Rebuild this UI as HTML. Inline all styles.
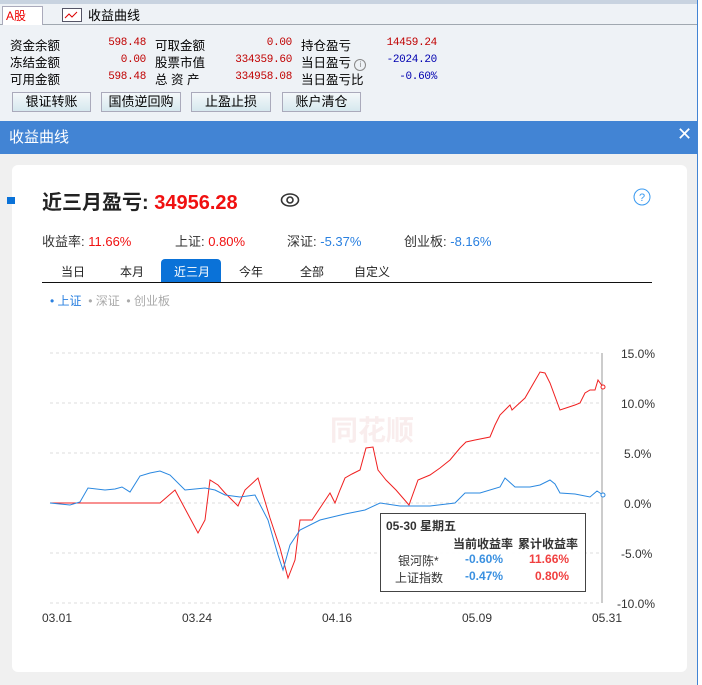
<!DOCTYPE html><html><head><meta charset="utf-8"><style>
body{margin:0;width:702px;height:685px;overflow:hidden;background:#f0f0f0;font-family:"Liberation Sans","Noto Sans CJK SC",sans-serif;position:relative}
.a{position:absolute;white-space:nowrap}
.top{position:absolute;left:0;top:0;width:697px;height:121px;background:#eef2f6}
.r,.b{position:absolute;text-align:right;font-family:"Liberation Mono",monospace;font-size:11px;letter-spacing:-0.3px}
.r{color:#c00000}.b{color:#0000b0}
.l{font-size:12.5px;color:#000}
.btn{position:absolute;top:92px;height:18px;border:1px solid #aab;background:linear-gradient(#f4f8fa,#d6e8ee);font-size:13px;text-align:center;line-height:18px}
</style></head><body>
<div class="top">
<div class="a" style="left:0;top:0;width:697px;height:4px;background:#c8d3e0"></div>
<div class="a" style="left:0;top:24px;width:697px;height:1px;background:#a0a8b0"></div>
<div class="a" style="left:2px;top:6px;width:36px;height:18px;background:#fff;border:1px solid #aab;border-bottom:none;color:#e00;font-size:12px;line-height:18px;padding-left:3px">A股</div>
<svg class="a" style="left:62px;top:8px" width="20" height="14"><rect x="0.5" y="0.5" width="19" height="13" fill="#fff" stroke="#556"/><path d="M3 10 L7 6 L10 9 L15 4" stroke="#d00" fill="none"/></svg>
<div class="a" style="left:88px;top:5px;font-size:13px">收益曲线</div>
<div class="a l" style="left:10px;top:35px">资金余额</div><div class="r" style="left:60px;width:86px;top:37px">598.48</div>
<div class="a l" style="left:155px;top:35px">可取金额</div><div class="r" style="left:200px;width:92px;top:37px">0.00</div>
<div class="a l" style="left:301px;top:35px">持仓盈亏</div><div class="r" style="left:350px;width:87px;top:37px">14459.24</div>
<div class="a l" style="left:10px;top:52px">冻结金额</div><div class="r" style="left:60px;width:86px;top:54px">0.00</div>
<div class="a l" style="left:155px;top:52px">股票市值</div><div class="r" style="left:200px;width:92px;top:54px">334359.60</div>
<div class="a l" style="left:301px;top:52px">当日盈亏 <span style="display:inline-block;width:10px;height:10px;border:1px solid #888;border-radius:50%;font-size:8px;line-height:10px;text-align:center;color:#888">i</span></div><div class="b" style="left:350px;width:87px;top:54px">-2024.20</div>
<div class="a l" style="left:10px;top:69px">可用金额</div><div class="r" style="left:60px;width:86px;top:71px">598.48</div>
<div class="a l" style="left:155px;top:69px">总&nbsp;资&nbsp;产</div><div class="r" style="left:200px;width:92px;top:71px">334958.08</div>
<div class="a l" style="left:301px;top:69px">当日盈亏比</div><div class="b" style="left:350px;width:87px;top:71px">-0.60%</div>
<div class="btn" style="left:12px;width:77px">银证转账</div>
<div class="btn" style="left:101px;width:78px">国债逆回购</div>
<div class="btn" style="left:191px;width:78px">止盈止损</div>
<div class="btn" style="left:282px;width:77px">账户清仓</div>
</div>
<div class="a" style="left:0;top:121px;width:697px;height:33px;background:#4284d4;color:#fff;font-size:15px;line-height:33px;padding-left:9px;box-sizing:border-box">收益曲线</div>
<div class="a" style="left:677px;top:124px;color:#fff;font-size:18px">✕</div>
<div class="a" style="left:697px;top:0;width:5px;height:685px;background:#fff;border-left:1px solid #4284d4"></div>
<div class="a" style="left:12px;top:165px;width:675px;height:507px;background:#fff;border-radius:6px"></div>
<div class="a" style="left:7px;top:197px;width:8px;height:7px;background:#0a72d8"></div>
<div class="a" style="left:42px;top:186px;font-size:20px;font-weight:bold;color:#222">近三月盈亏: <span style="color:#f01010">34956.28</span></div>
<svg class="a" style="left:280px;top:192px" width="20" height="16"><ellipse cx="10" cy="8" rx="8.5" ry="6" fill="none" stroke="#333" stroke-width="1.6"/><circle cx="10" cy="8" r="3" fill="none" stroke="#333" stroke-width="1.6"/></svg>
<svg class="a" style="left:633px;top:188px" width="18" height="18"><circle cx="9" cy="9" r="8" fill="none" stroke="#3a9af0"/><text x="9" y="13" font-size="11" text-anchor="middle" fill="#3a9af0" font-family="Liberation Sans">?</text></svg>
<div class="a" style="left:42px;top:231px;font-size:13px;color:#333">收益率: <span style="color:#f01010">11.66%</span></div>
<div class="a" style="left:175px;top:231px;font-size:13px;color:#333">上证: <span style="color:#f01010">0.80%</span></div>
<div class="a" style="left:287px;top:231px;font-size:13px;color:#333">深证: <span style="color:#2a80e0">-5.37%</span></div>
<div class="a" style="left:404px;top:231px;font-size:13px;color:#333">创业板: <span style="color:#2a80e0">-8.16%</span></div>
<div class="a" style="left:161px;top:259px;width:60px;height:23px;background:#0a72d8;border-radius:4px 4px 0 0"></div>
<div class="a" style="left:42px;top:282px;width:610px;height:1px;background:#111"></div>
<div class="a" style="left:61px;top:263px;font-size:12px;color:#222">当日</div>
<div class="a" style="left:120px;top:263px;font-size:12px;color:#222">本月</div>
<div class="a" style="left:174px;top:263px;font-size:12px;color:#fff">近三月</div>
<div class="a" style="left:239px;top:263px;font-size:12px;color:#222">今年</div>
<div class="a" style="left:300px;top:263px;font-size:12px;color:#222">全部</div>
<div class="a" style="left:354px;top:263px;font-size:12px;color:#222">自定义</div>
<div class="a" style="left:50px;top:292px;font-size:12px;color:#2a80e0">• 上证 &nbsp;<span style="color:#aaa">• 深证 &nbsp;• 创业板</span></div>
<svg class="a" style="left:0;top:0" width="697" height="685">
<g stroke="#ddd" stroke-dasharray="3,3"><line x1="50" y1="353" x2="602" y2="353"/><line x1="50" y1="403" x2="602" y2="403"/><line x1="50" y1="453" x2="602" y2="453"/><line x1="50" y1="503" x2="602" y2="503"/><line x1="50" y1="553" x2="602" y2="553"/><line x1="50" y1="603" x2="602" y2="603"/></g>
<line x1="602" y1="353" x2="602" y2="603" stroke="#999"/>
<g font-size="12" fill="#333" font-family="Liberation Sans"><text x="621" y="358">15.0%</text><text x="621" y="408">10.0%</text><text x="624" y="458">5.0%</text><text x="624" y="508">0.0%</text><text x="621" y="558">-5.0%</text><text x="617" y="608">-10.0%</text>
<text x="42" y="622">03.01</text><text x="182" y="622">03.24</text><text x="322" y="622">04.16</text><text x="462" y="622">05.09</text><text x="592" y="622">05.31</text></g>
<text x="330" y="440" font-size="28" fill="#f9eded" font-family="Noto Sans CJK SC" font-weight="bold">同花顺</text>
<polyline fill="none" stroke="#f02020" stroke-width="1" points="50,503 160,503 175,490 190,518 198,533 205,520 210,480 218,485 225,493 238,506 245,490 258,478 270,518 280,548 288,578 295,560 300,520 312,520 322,505 330,493 335,503 340,490 345,478 352,474 360,470 366,448 373,447 378,470 386,480 396,490 409,505 418,480 430,475 440,468 450,460 460,448 466,442 475,440 490,437 495,425 500,415 510,405 512,410 525,398 540,372 545,373 550,383 560,410 575,405 580,403 585,393 590,390 595,390 598,380 603,387"/>
<polyline fill="none" stroke="#2a88e0" stroke-width="1" points="50,503 70,505 80,502 88,488 105,490 115,489 122,487 130,492 140,476 150,473 160,471 170,475 185,490 205,488 215,490 225,495 240,497 255,495 268,520 278,555 283,570 290,545 300,530 320,520 345,514 365,510 380,503 400,506 430,506 455,503 465,493 480,493 500,487 505,478 515,487 530,487 540,485 550,480 555,484 560,493 575,494 590,497 597,491 603,495"/>
<circle cx="603" cy="387" r="2" fill="#fff" stroke="#f02020"/><circle cx="603" cy="495" r="2" fill="#fff" stroke="#2a88e0"/>
</svg>
<div class="a" style="left:380px;top:513px;width:204px;height:77px;background:rgba(255,255,255,.95);border:1px solid #444;font-size:12px;color:#333;font-weight:bold">
<div class="a" style="left:5px;top:3px">05-30 星期五</div>
<div class="a" style="left:72px;top:21px">当前收益率</div><div class="a" style="left:137px;top:21px">累计收益率</div>
<div class="a" style="left:17px;top:38px;font-weight:normal">银河陈*</div><div class="a" style="left:84px;top:38px;color:#3a90e0">-0.60%</div><div class="a" style="left:148px;top:38px;color:#f04040">11.66%</div>
<div class="a" style="left:14px;top:55px;font-weight:normal">上证指数</div><div class="a" style="left:84px;top:55px;color:#3a90e0">-0.47%</div><div class="a" style="left:154px;top:55px;color:#f04040">0.80%</div>
</div>
</body></html>
